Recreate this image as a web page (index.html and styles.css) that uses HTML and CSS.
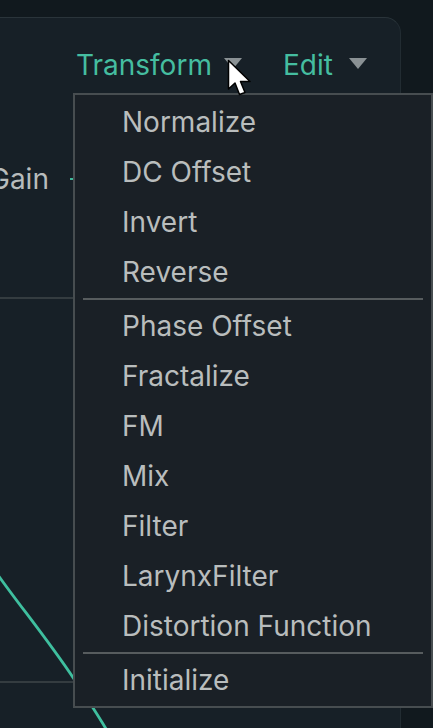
FILE: index.html
```
<!DOCTYPE html>
<html>
<head>
<meta charset="utf-8">
<link rel="stylesheet" href="styles.css">
</head>
<body>
<div class="app">
  <div class="panel">
    <div class="header">
      <span class="tab tab-transform">Transform</span>
      <span class="caret caret-transform"></span>
      <span class="tab tab-edit">Edit</span>
      <span class="caret caret-edit"></span>
    </div>
    <div class="controls">
      <div class="gain-row">
        <span class="gain-label">Gain</span>
        <span class="gain-tick"></span>
      </div>
    </div>
    <div class="graph"></div>
    <div class="footer"></div>
  </div>

  <svg class="plot" width="433" height="728" viewBox="0 0 433 728">
    <path d="M-2,575 C 20,606 48,640 74,679 S 98,716 108,732" fill="none" stroke="#3fbf9f" stroke-width="2.8" stroke-linecap="round"/>
  </svg>

  <div class="menu">
    <div class="item">Normalize</div>
    <div class="item">DC Offset</div>
    <div class="item">Invert</div>
    <div class="item">Reverse</div>
    <div class="sep"></div>
    <div class="item">Phase Offset</div>
    <div class="item">Fractalize</div>
    <div class="item">FM</div>
    <div class="item">Mix</div>
    <div class="item">Filter</div>
    <div class="item">LarynxFilter</div>
    <div class="item">Distortion Function</div>
    <div class="sep"></div>
    <div class="item">Initialize</div>
  </div>

  <svg class="cursor" width="30" height="42" viewBox="0 0 30 42">
    <path d="M1.5,1.5 L1.5,30 L8,24 L12.5,35.5 L18,33.5 L13.5,22.5 L23,22.5 Z" fill="#ffffff" stroke="#000000" stroke-width="1.5" stroke-linejoin="round"/>
  </svg>
</div>
</body>
</html>
```
FILE: styles.css
```
* { box-sizing: border-box; }
html, body { margin: 0; padding: 0; }
body {
  background: #11191e;
  font-family: Inter, "Noto Sans", sans-serif;
}
.app {
  position: relative;
  width: 433px;
  height: 728px;
  overflow: hidden;
  background: #11191e;
}
.panel {
  margin-top: 17px;
  margin-left: -20px;
  width: 421px;
  height: 760px;
  background: #172027;
  border-top: 1px solid #2a343a;
  border-right: 1px solid #222c32;
  border-top-right-radius: 16px;
  display: flex;
  flex-direction: column;
}
.header {
  height: 93px;
  display: flex;
  align-items: center;
  padding-left: 96px;
}
.tab {
  font-size: 28px;
  color: #45bda0;
  line-height: 1;
}
.caret {
  width: 0;
  height: 0;
  border-left: 9px solid transparent;
  border-right: 9px solid transparent;
  border-top: 11px solid #8a9194;
  margin-top: -2px;
}
.caret-transform { margin-left: 12px; }
.tab-edit { margin-left: 41px; }
.caret-edit { margin-left: 16px; }
.controls {
  height: 188px;
  border-bottom: 2px solid #343c40;
  padding-top: 50px;
}
.gain-row {
  display: flex;
  align-items: center;
  height: 36px;
}
.gain-label {
  font-size: 28px;
  color: #b7bcbc;
  margin-left: 9px;
  line-height: 1;
}
.gain-tick {
  width: 5px;
  height: 2px;
  background: #3fb89a;
  margin-left: 21px;
}
.graph {
  height: 384px;
  border-bottom: 2px solid #343c40;
}
.footer { flex: 1; }
.plot {
  position: absolute;
  left: 0;
  top: 0;
  pointer-events: none;
}
.menu {
  position: absolute;
  left: 73px;
  top: 93px;
  width: 360px;
  background: #1a2026;
  border: 2px solid #474d50;
  padding: 2px 0 1px 0;
}
.item {
  height: 50px;
  line-height: 50px;
  font-size: 28px;
  color: #b9bdbd;
  padding-left: 47px;
  white-space: nowrap;
}
.sep {
  height: 2px;
  margin: 1px 8px;
  background: #575c5e;
}
.cursor {
  position: absolute;
  left: 227px;
  top: 59px;
}
```
